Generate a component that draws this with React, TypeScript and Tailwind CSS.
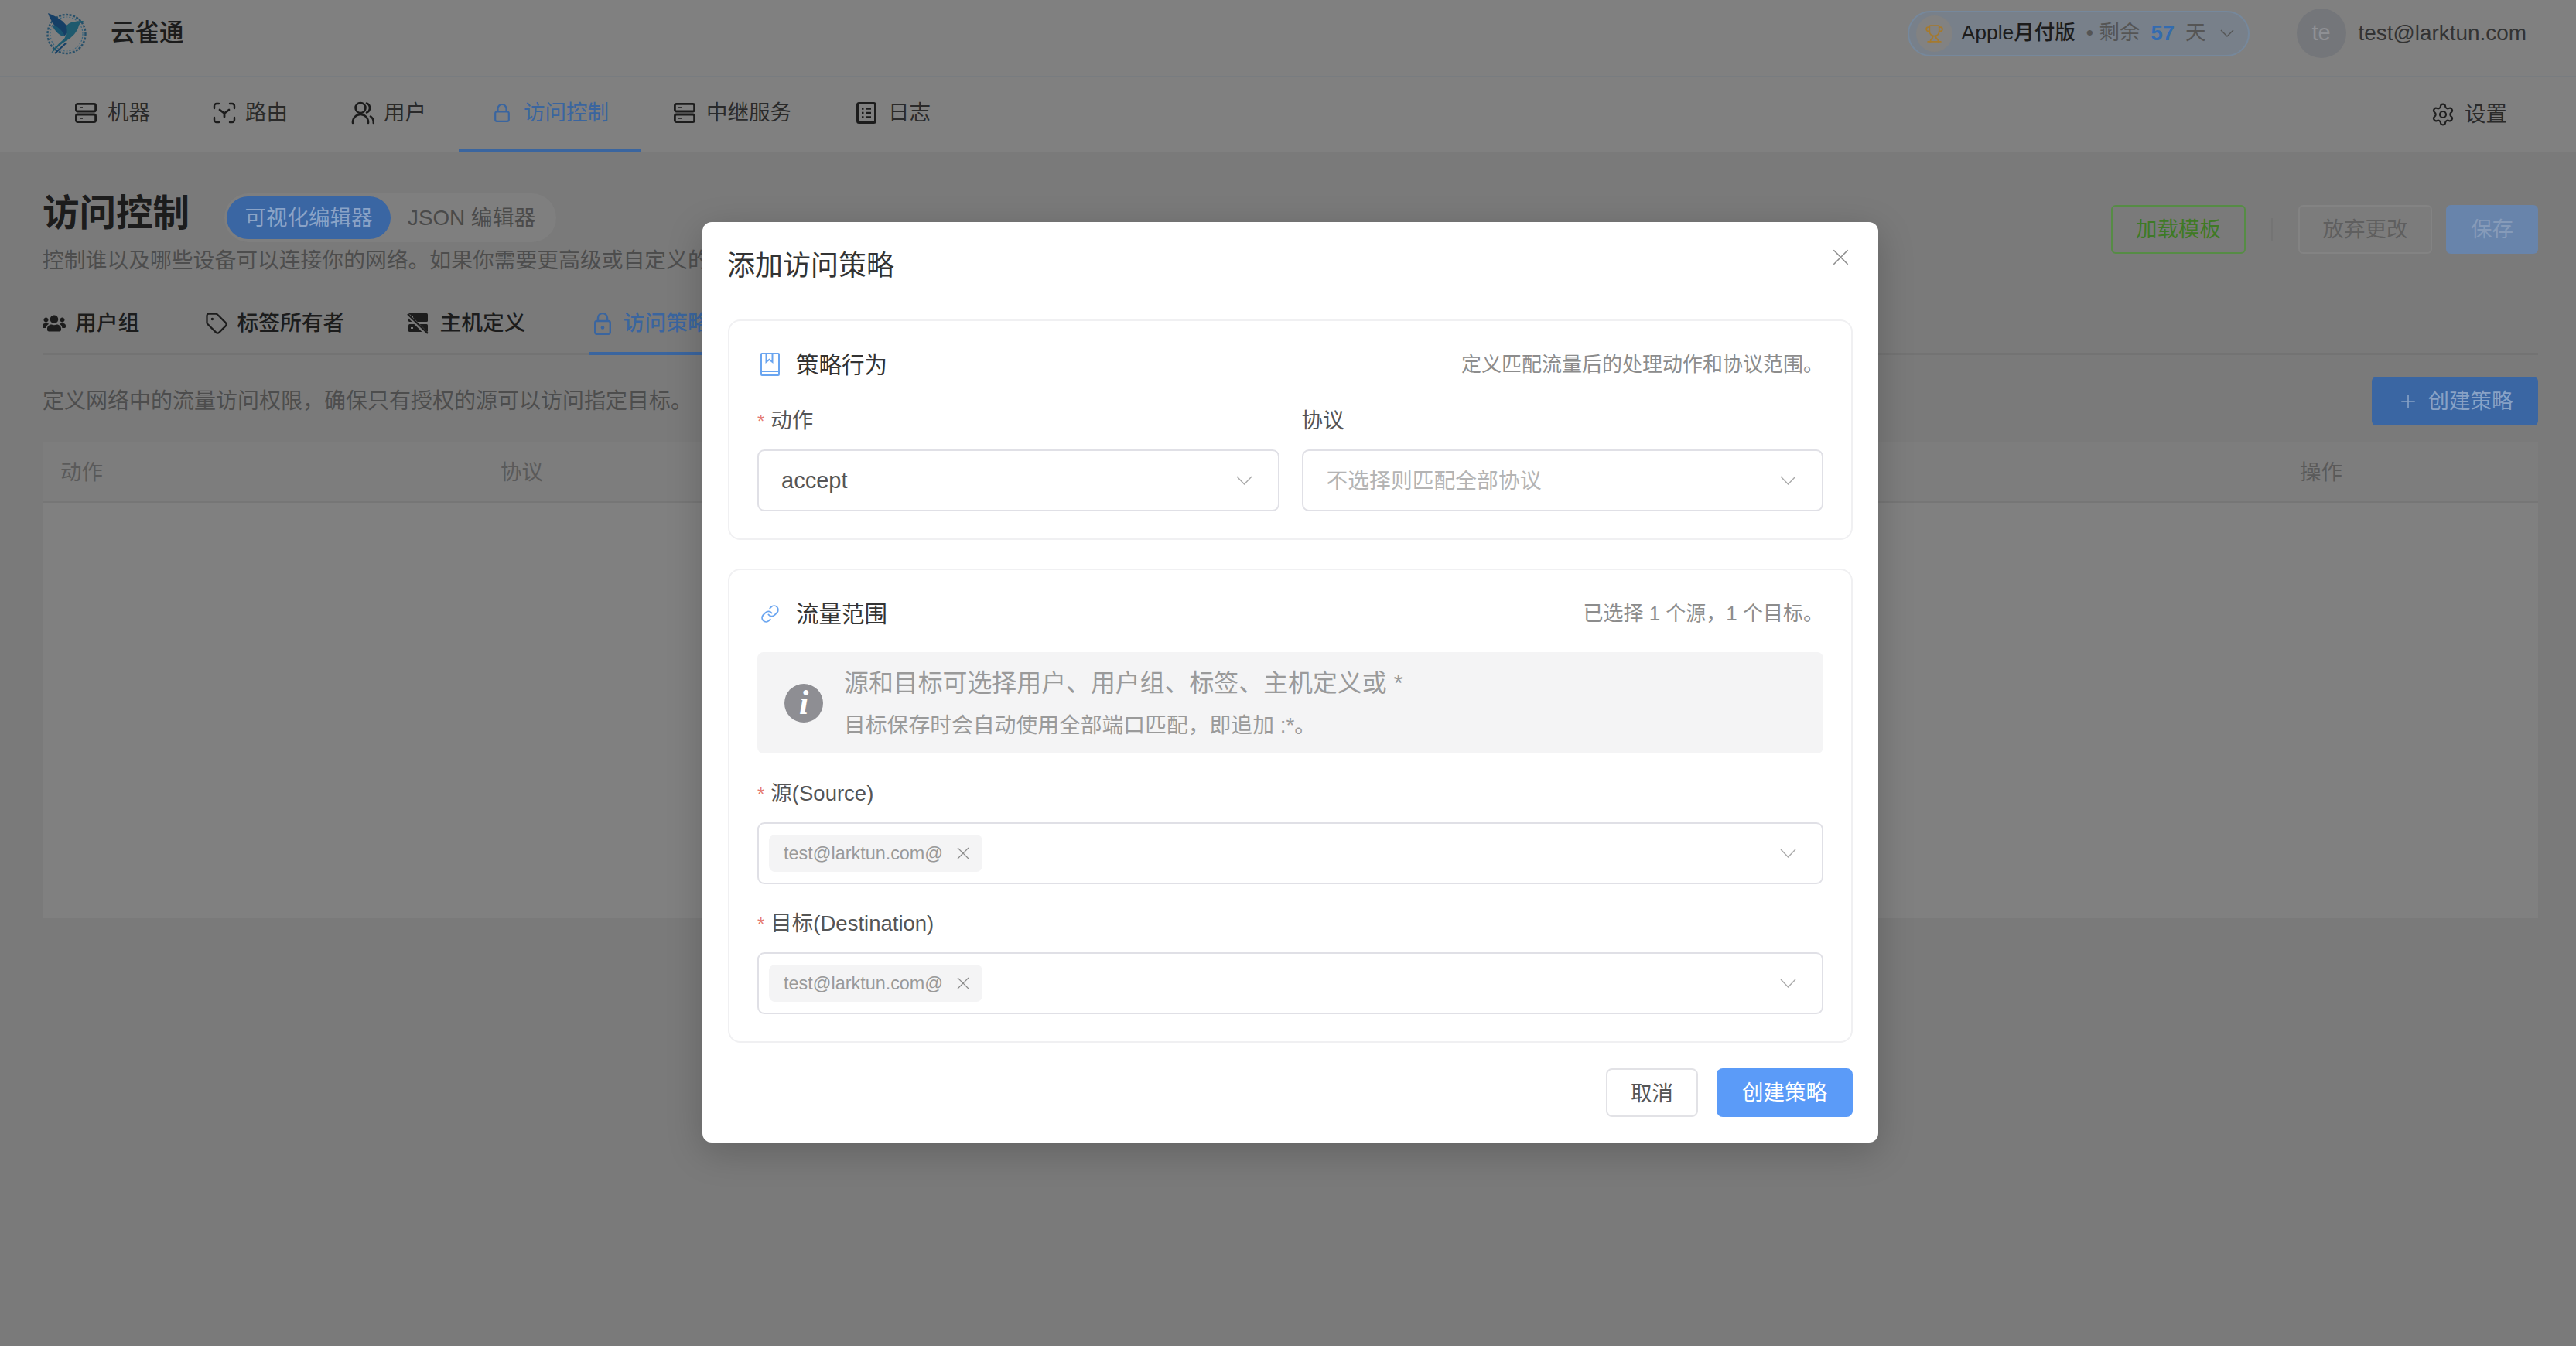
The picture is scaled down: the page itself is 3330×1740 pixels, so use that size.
import { Settings, Trophy, Tag, Link, Plus } from "lucide-react";
import { FaUsers } from "react-icons/fa";

const FONT = "font-['Liberation_Sans','Noto_Sans_CJK_SC',sans-serif]";

function ServerIcon() {
  return (
    <svg width="28" height="26" viewBox="0 0 28 26" fill="none" stroke="#1c1c1c" strokeWidth="2.8" className="shrink-0">
      <rect x="1.4" y="1.4" width="25.2" height="9.6" rx="2" />
      <rect x="1.4" y="15" width="25.2" height="9.6" rx="2" />
      <path d="M6 6.2h4M6 19.8h4" strokeWidth="1.8" />
    </svg>
  );
}

function RouteIcon() {
  return (
    <svg width="30" height="28" viewBox="0 0 30 28" fill="none" stroke="#1c1c1c" strokeWidth="2.4" strokeLinecap="round" className="shrink-0">
      <path d="M2 8V5a3 3 0 0 1 3-3h3M22 2h3a3 3 0 0 1 3 3v3M28 20v3a3 3 0 0 1-3 3h-3M8 26H5a3 3 0 0 1-3-3v-3" />
      <path d="M9 10l6 4.5 6-4.5M15 14.5V19" strokeWidth="2.8" />
    </svg>
  );
}

function UsersIcon() {
  return (
    <svg width="30" height="30" viewBox="0 0 30 30" fill="none" stroke="#1c1c1c" strokeWidth="2.6" strokeLinecap="round" className="shrink-0">
      <circle cx="12" cy="8.5" r="6.5" />
      <path d="M2 28v-1a10 10 0 0 1 20 0v1" />
      <path d="M20 2.5a6.5 6.5 0 0 1 0 12" />
      <path d="M25 19.5a9 9 0 0 1 3.8 7.5v1" />
    </svg>
  );
}

function LockIcon() {
  return (
    <svg width="20" height="24" viewBox="0 0 20 24" fill="none" stroke="#3a659f" strokeWidth="2.2" className="shrink-0">
      <rect x="1.2" y="10.5" width="17.6" height="12.3" rx="2" />
      <path d="M4.5 10.5V6.5a5.5 5.5 0 0 1 11 0v4" />
    </svg>
  );
}

function LogIcon() {
  return (
    <svg width="26" height="28" viewBox="0 0 26 28" fill="none" stroke="#1c1c1c" strokeWidth="3" className="shrink-0">
      <rect x="1.5" y="1.5" width="23" height="25" rx="2" />
      <path d="M7 8.5h2.5M7 14h2.5M7 19.5h2.5M12 8.5h7M12 14h7M12 19.5h7" strokeWidth="2.4" />
    </svg>
  );
}

function HostIcon() {
  return (
    <svg width="28" height="30" viewBox="0 0 28 30" className="shrink-0">
      <rect x="2" y="2" width="25" height="11" rx="1.5" fill="#1c1c1c" />
      <rect x="2" y="16" width="25" height="10" rx="1.5" fill="#1c1c1c" />
      <path d="M5 7h3M5 21h3" stroke="#7a7a7a" strokeWidth="2" />
      <path d="M2 5l24 24" stroke="#7a7a7a" strokeWidth="5" />
      <path d="M1 3l26 25" stroke="#1c1c1c" strokeWidth="2.4" />
    </svg>
  );
}

function LockDotIcon() {
  return (
    <svg width="22" height="29" viewBox="0 0 22 29" fill="none" stroke="#3a659f" strokeWidth="2.4" className="shrink-0">
      <rect x="1.2" y="11" width="19.6" height="16.8" rx="2.5" />
      <path d="M5 11V7a6 6 0 0 1 12 0v4" />
      <circle cx="11" cy="19.4" r="2.3" fill="#3a659f" stroke="none" />
    </svg>
  );
}

function BookIcon() {
  return (
    <svg width="25" height="30" viewBox="0 0 25 30" fill="none" stroke="#6aa5f0" strokeWidth="2" className="shrink-0">
      <rect x="1" y="1" width="23" height="28" rx="1" />
      <path d="M1 24h23M7.5 1v11l4-3.2 4 3.2V1" />
    </svg>
  );
}

function Chevron({ color = "#a9a9a9" }: { color?: string }) {
  return (
    <svg width="21" height="12" viewBox="0 0 21 12" fill="none" stroke={color} strokeWidth="1.4" className="shrink-0">
      <path d="M1 1l9.5 10L20 1" />
    </svg>
  );
}

function Cross({ size = 16, color = "#8c8c8c" }: { size?: number; color?: string }) {
  return (
    <svg width={size} height={size} viewBox="0 0 16 16" fill="none" stroke={color} strokeWidth="1.2" className="shrink-0">
      <path d="M1 1l14 14M15 1L1 15" />
    </svg>
  );
}

function Logo() {
  return (
    <svg width="54" height="56" viewBox="0 0 54 56" fill="none" className="shrink-0">
      <ellipse cx="27" cy="29" rx="24.5" ry="25" stroke="#27506a" strokeWidth="2.4" strokeDasharray="3 1.6" />
      <ellipse cx="27" cy="29" rx="21" ry="22" stroke="#38647c" strokeWidth="1.2" strokeDasharray="2 2" />
      <path d="M3 2c8 3 18 8 24 16 2 5 1 10-3 14C17 26 7 14 3 2z" fill="#163f66" />
      <path d="M8 17c6 1 13 6 17 15-5 1-13-6-17-15z" fill="#1a5570" />
      <path d="M26 20c2-4 7-7 12-7 3-1 7-1 12-1-4 2-6 3-7 6-2 8-8 15-17 20-5 3-10 7-13 11l-6 5c4-8 12-14 17-19 3-4 3-10 2-15z" fill="#1f5a6e" />
      <path d="M12 54l14-13" stroke="#163f66" strokeWidth="2" />
    </svg>
  );
}

function Star() {
  return <span className="mr-[8px] text-[24px] text-[#e57b74]">*</span>;
}

function FieldLabel({ required, children }: { required?: boolean; children: React.ReactNode }) {
  return (
    <div className="h-[48px] pt-[1px] text-[27.5px] leading-[48px] text-[#555555]">
      {required && <Star />}
      {children}
    </div>
  );
}

function Select({ children }: { children: React.ReactNode }) {
  return (
    <div className="flex h-[80px] items-center justify-between rounded-[9px] border-2 border-[#e0e0e6] bg-white pr-[33px]">
      {children}
      <Chevron />
    </div>
  );
}

function TagSelect() {
  return (
    <Select>
      <div className="ml-[13px] flex h-[48px] w-[276px] items-center justify-between rounded-[8px] bg-[#f4f4f5] pl-[19px] pr-[17px]">
        <span className="pt-[2px] text-[23.4px] text-[#999999]">test@larktun.com@</span>
        <Cross />
      </div>
    </Select>
  );
}

function SectionHead({ icon, title, note }: { icon: React.ReactNode; title: string; note: string }) {
  return (
    <div className="flex h-[48px] items-center justify-between">
      <div className="ml-[4px] flex items-center gap-[21px]">
        {icon}
        <span className="pt-[3px] text-[29.5px] text-[#333333]">{title}</span>
      </div>
      <span className="text-[26px] text-[#8c8c8c]">{note}</span>
    </div>
  );
}

function Modal() {
  return (
    <div className="relative h-[1190px] w-[1520px] rounded-[12px] bg-white px-[33px] shadow-[0_12px_48px_rgba(0,0,0,0.2)]">
      <div className="-ml-[1px] flex h-[112px] items-center pt-[2px] text-[36px] text-[#333333]">添加访问策略</div>
      <button className="absolute right-[38px] top-[35px]">
        <Cross size={21} color="#8c8c8c" />
      </button>
      <div className="mt-[14px] h-[285px] rounded-[16px] border-2 border-[#f0f0f2] px-[36px] pt-[32px]">
        <SectionHead icon={<BookIcon />} title="策略行为" note="定义匹配流量后的处理动作和协议范围。" />
        <div className="mt-[24px] grid grid-cols-2 gap-x-[29px]">
          <div>
            <FieldLabel required>动作</FieldLabel>
            <div className="mt-[14px]">
              <Select>
                <span className="pl-[29px] pt-[2px] text-[29px] text-[#555555]">accept</span>
              </Select>
            </div>
          </div>
          <div>
            <FieldLabel>协议</FieldLabel>
            <div className="mt-[14px]">
              <Select>
                <span className="pl-[30px] pt-[2px] text-[27.8px] text-[#b4b4b4]">不选择则匹配全部协议</span>
              </Select>
            </div>
          </div>
        </div>
      </div>
      <div className="mt-[37px] h-[613px] rounded-[16px] border-2 border-[#f0f0f2] px-[36px] pt-[32px]">
        <SectionHead
          icon={<Link size={25} color="#6aa5f0" strokeWidth={1.8} className="shrink-0" />}
          title="流量范围"
          note="已选择 1 个源，1 个目标。"
        />
        <div className="mt-[26px] flex h-[131px] items-center gap-[27px] rounded-[8px] bg-[#f4f4f5] pl-[35px]">
          <div className="flex h-[50px] w-[50px] items-center justify-center rounded-full bg-[#8e8e93]">
            <span className="font-['Liberation_Serif',serif] text-[44px] font-bold italic leading-none text-white">i</span>
          </div>
          <div className="flex flex-col gap-[14px] pt-[3px]">
            <div className="h-[42px] text-[31.9px] leading-[42px] text-[#9a9a9a]">源和目标可选择用户、用户组、标签、主机定义或 *</div>
            <div className="h-[40px] text-[27.8px] leading-[40px] text-[#9a9a9a]">目标保存时会自动使用全部端口匹配，即追加 :*。</div>
          </div>
        </div>
        <div className="mt-[27px]">
          <FieldLabel required>源(Source)</FieldLabel>
        </div>
        <div className="mt-[14px]">
          <TagSelect />
        </div>
        <div className="mt-[26px]">
          <FieldLabel required>目标(Destination)</FieldLabel>
        </div>
        <div className="mt-[14px]">
          <TagSelect />
        </div>
      </div>
      <div className="mt-[33px] flex justify-end gap-[24px]">
        <button className="flex h-[63px] w-[119px] items-center justify-center rounded-[8px] border-2 border-[#e2e2e6] bg-white pt-[2px] text-[27.5px] text-[#555555]">取消</button>
        <button className="flex h-[63px] w-[176px] items-center justify-center rounded-[8px] bg-[#5b9bf8] text-[27.5px] text-white">创建策略</button>
      </div>
    </div>
  );
}

function NavItem({ icon, label, gap, className, color }: { icon: React.ReactNode; label: string; gap: string; className: string; color?: string }) {
  return (
    <div className={`flex h-full items-center border-b-4 ${gap} ${className}`}>
      {icon}
      <span className={`text-[27.5px] ${color ?? "text-[#2a2a2a]"}`}>{label}</span>
    </div>
  );
}

export default function App() {
  return (
    <div className={`relative h-[1740px] w-[3330px] overflow-hidden bg-[#7a7a7a] ${FONT}`}>
      {/* top bar */}
      <header className="flex h-[100px] items-center justify-between border-b-2 border-[#787c80] bg-[#808080] pb-[12px] pl-[59px] pr-[64px]">
        <div className="flex items-center gap-[30px]">
          <Logo />
          <span className="text-[31.5px] font-medium text-[#1c1c1c]">云雀通</span>
        </div>
        <div className="flex items-center">
          <div className="flex h-[59px] w-[442px] items-center rounded-full border-2 border-[#76889c] bg-[#78808a] pl-[9px]">
            <div className="flex h-[47px] w-[47px] items-center justify-center rounded-full bg-[#828282]">
              <Trophy size={25} color="#a57a2e" strokeWidth={1.7} />
            </div>
            <span className="ml-[12px] text-[26.5px] font-medium text-[#1c1c1c]">Apple月付版</span>
            <span className="ml-[14px] text-[26.5px] text-[#555555]">• 剩余</span>
            <span className="ml-[14px] text-[27.5px] font-bold text-[#336bb0]">57</span>
            <span className="ml-[14px] text-[26.5px] text-[#555555]">天</span>
            <span className="ml-[18px] flex">
              <svg width="18" height="10" viewBox="0 0 18 10" fill="none" stroke="#555" strokeWidth="1.4">
                <path d="M1 1l8 8 8-8" />
              </svg>
            </span>
          </div>
          <div className="ml-[61px] flex h-[64px] w-[64px] items-center justify-center rounded-full bg-[#74767a] text-[29px] text-[#8f9094]">te</div>
          <span className="ml-[16px] text-[27.9px] text-[#333333]">test@larktun.com</span>
        </div>
      </header>

      {/* nav */}
      <nav className="flex h-[96px] items-center justify-between bg-[#808080] pl-[57px] pr-[89px]">
        <div className="flex h-full">
          <NavItem icon={<ServerIcon />} label="机器" gap="gap-[14px]" className="border-transparent pl-[40px] pr-[40px]" />
          <NavItem icon={<RouteIcon />} label="路由" gap="gap-[12px]" className="border-transparent pl-[41px] pr-[40px]" />
          <NavItem icon={<UsersIcon />} label="用户" gap="gap-[12px]" className="border-transparent pl-[42px] pr-[42px]" />
          <NavItem
            icon={<LockIcon />}
            label="访问控制"
            gap="gap-[18px]"
            color="text-[#3a659f]"
            className="border-[#3a659f] pl-[46px] pr-[41px]"
          />
          <NavItem icon={<ServerIcon />} label="中继服务" gap="gap-[14px]" className="border-transparent pl-[43px] pr-[40px]" />
          <NavItem icon={<LogIcon />} label="日志" gap="gap-[15px]" className="border-transparent pl-[44px] pr-[40px]" />
        </div>
        <div className="flex items-center gap-[12px]">
          <Settings size={32} color="#1f1f1f" strokeWidth={1.6} />
          <span className="text-[27.5px] text-[#2a2a2a]">设置</span>
        </div>
      </nav>

      {/* page */}
      <main className="pl-[55px] pr-[49px] pt-[54px]">
        <div className="flex items-start justify-between">
          <div>
            <div className="flex items-start gap-[45px]">
              <h1 className="h-[48px] pt-[2px] text-[47.5px] font-bold leading-[48px] text-[#1c1c1c]">访问控制</h1>
              <div className="flex h-[63px] w-[429px] items-center rounded-full bg-[#7f7f7f] pl-[3px]">
                <div className="flex h-[55px] w-[212px] items-center justify-center rounded-full bg-[#3a66a3] text-[27.5px] text-[#8aa3c7]">可视化编辑器</div>
                <span className="ml-[22px] text-[27.8px] text-[#4a4a4a]">JSON 编辑器</span>
              </div>
            </div>
            <p className="h-[48px] text-[27.8px] leading-[48px] text-[#4d4d4d]">控制谁以及哪些设备可以连接你的网络。如果你需要更高级或自定义的</p>
          </div>
          <div className="mt-[15px] flex items-center">
            <button className="flex h-[63px] w-[174px] items-center justify-center rounded-[6px] border-2 border-[#568c45] text-[27.5px] text-[#3f7a25]">加载模板</button>
            <div className="ml-[33px] h-[30px] w-[2px] bg-[#747474]" />
            <button className="ml-[33px] flex h-[63px] w-[173px] items-center justify-center rounded-[6px] border-2 border-[#838383] bg-[#7c7c7c] text-[27.5px] text-[#5f5f5f]">放弃更改</button>
            <button className="ml-[18px] flex h-[63px] w-[119px] items-center justify-center rounded-[6px] bg-[#6884ab] text-[27.5px] text-[#869bb9]">保存</button>
          </div>
        </div>

        <div className="mt-[26px] flex h-[72px] items-start gap-[85px] border-b-[3px] border-[#737373]">
          <div className="flex h-[72px] items-center gap-[12px] pb-[10px]">
            <FaUsers size={30} color="#1c1c1c" />
            <span className="text-[27.8px] font-medium text-[#1c1c1c]">用户组</span>
          </div>
          <div className="flex h-[72px] items-center gap-[11px] pb-[10px]">
            <Tag size={30} color="#1c1c1c" strokeWidth={1.8} />
            <span className="text-[27.8px] font-medium text-[#1c1c1c]">标签所有者</span>
          </div>
          <div className="-ml-[4px] flex h-[72px] items-center gap-[14px] pb-[10px]">
            <HostIcon />
            <span className="text-[27.8px] font-medium text-[#1c1c1c]">主机定义</span>
          </div>
          <div className="-ml-[4px] flex h-[72px] items-center gap-[16px] border-b-4 border-[#3a659f] pb-[6px] pl-[7px] pr-[40px]">
            <LockDotIcon />
            <span className="text-[27.8px] font-medium text-[#3a659f]">访问策略</span>
          </div>
        </div>

        <div className="mt-[28px] flex h-[63px] items-center justify-between">
          <span className="text-[28px] text-[#4d4d4d]">定义网络中的流量访问权限，确保只有授权的源可以访问指定目标。</span>
          <button className="flex h-[63px] w-[215px] items-center justify-center gap-[12px] rounded-[6px] bg-[#3a66a3] text-[27.5px] text-[#88a2c6]">
            <Plus size={28} color="#88a2c6" strokeWidth={1.4} />
            创建策略
          </button>
        </div>

        <div className="mt-[21px] h-[616px] bg-[#808080]">
          <div className="flex h-[79px] items-center border-b-2 border-[#767676] bg-[#7d7d7d] px-[23px] pt-[3px] text-[27.5px] text-[#5a5a5a]">
            <span className="w-[569px]">动作</span>
            <span className="flex-1">协议</span>
            <span className="w-[285px]">操作</span>
          </div>
        </div>
      </main>

      {/* dialog */}
      <div className="absolute inset-0 flex items-start justify-center pl-[6px] pt-[287px]">
        <Modal />
      </div>
    </div>
  );
}
